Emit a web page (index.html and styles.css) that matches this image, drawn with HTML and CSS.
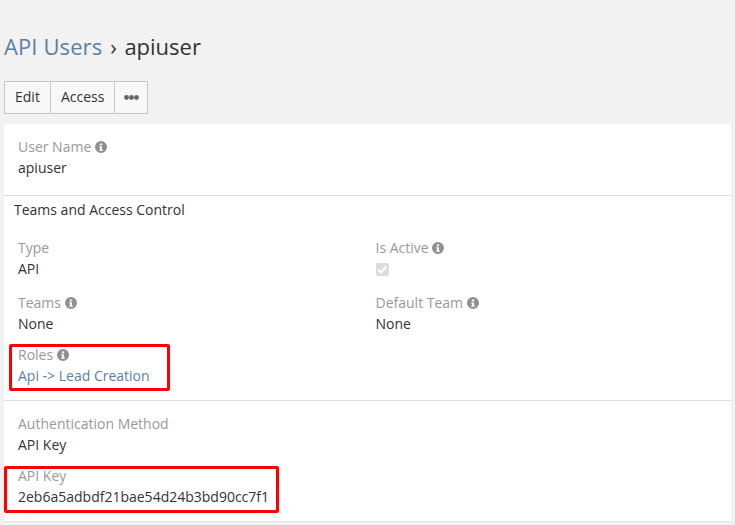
FILE: index.html
```html
<!DOCTYPE html>
<html lang="en">
<head>
<meta charset="utf-8">
<title>apiuser</title>
<link rel="stylesheet" href="styles.css">
</head>
<body>
<h1 class="title"><a class="crumb" href="#">API Users</a><span class="sep">›</span><span>apiuser</span></h1>
<div class="btn-group">
  <button class="btn">Edit</button>
  <button class="btn">Access</button>
  <button class="btn btn-more" aria-label="More"><svg width="15" height="5" viewBox="0 0 15 5"><circle cx="2.5" cy="2.5" r="2.4"/><circle cx="7.5" cy="2.5" r="2.4"/><circle cx="12.5" cy="2.5" r="2.4"/></svg></button>
</div>
<main class="panel">
  <section class="section sec-user">
    <div class="field">
      <div class="label">User Name <svg class="info" viewBox="0 0 12 12"><use href="#i"/></svg></div>
      <div class="value">apiuser</div>
    </div>
  </section>
  <section class="section sec-teams">
    <h2 class="sec-title">Teams and Access Control</h2>
    <div class="grid">
      <div class="field tall">
        <div class="label">Type</div>
        <div class="value">API</div>
      </div>
      <div class="field tall">
        <div class="label">Is Active <svg class="info" viewBox="0 0 12 12"><use href="#i"/></svg></div>
        <div class="value"><span class="check"><svg width="10" height="9" viewBox="0 0 10 9"><path d="M1 4.5 4 7.5 9 1.5" fill="none" stroke="#fff" stroke-width="2"/></svg></span></div>
      </div>
      <div class="field">
        <div class="label">Teams <svg class="info" viewBox="0 0 12 12"><use href="#i"/></svg></div>
        <div class="value">None</div>
      </div>
      <div class="field">
        <div class="label">Default Team <svg class="info" viewBox="0 0 12 12"><use href="#i"/></svg></div>
        <div class="value">None</div>
      </div>
      <div class="field last">
        <div class="label">Roles <svg class="info" viewBox="0 0 12 12"><use href="#i"/></svg></div>
        <div class="value"><a class="link" href="#">Api -&gt; Lead Creation</a></div>
        <span class="mark mark-roles"></span>
      </div>
    </div>
  </section>
  <section class="section sec-auth">
    <div class="field">
      <div class="label">Authentication Method</div>
      <div class="value">API Key</div>
    </div>
    <div class="field last">
      <div class="label">API Key</div>
      <div class="value">2eb6a5adbdf21bae54d24b3bd90cc7f1</div>
      <span class="mark mark-key"></span>
    </div>
  </section>
</main>
<svg class="defs" width="0" height="0"><defs><g id="i"><path fill-rule="evenodd" d="M6 0a6 6 0 1 1 0 12A6 6 0 0 1 6 0ZM4.8 2.4v1.9h2.4V2.4ZM4.2 5.2v1.2h.9v2.2h-.9v1.1h3.6V8.6h-.9V5.2Z"/></g></defs></svg>
</body>
</html>
```
FILE: styles.css
```css
* { box-sizing: border-box; }
html, body { height: 100%; }
body {
  margin: 0;
  padding: 0 4px;
  background: #f2f2f2;
  color: #333;
  font: 14px/21px "Open Sans", sans-serif;
  overflow: hidden;
}
.title {
  margin: 0;
  padding-top: 31px;
  height: 81px;
  font-size: 22px;
  line-height: 30px;
  font-weight: 400;
}
.crumb { color: #5b80a5; text-decoration: none; letter-spacing: .1px; }
.sep { margin: 0 7.5px 0 8px; }
.btn-group { display: flex; height: 33px; }
.btn {
  height: 33px;
  margin: 0 0 0 -1px;
  padding: 0 10px 2px;
  border: 1px solid #c7c7c7;
  background: #f8f8f8;
  color: #333;
  font: inherit;
}
.btn:first-child { margin-left: 0; }
.btn-more { padding: 0 8.5px 1px; }
.btn-more svg { display: block; fill: #666; }
.panel {
  margin-top: 10px;
  height: 397px;
  background: #fff;
  box-shadow: 0 1px 1px rgba(0,0,0,.05);
}
.section { padding: 0 14px; }
.section + .section { border-top: 1px solid #ddd; }
.sec-user { height: 71px; padding-top: 12px; }
.sec-teams { height: 205px; }
.sec-auth { padding-top: 12px; }
.sec-title {
  margin: 0 0 0 -4px;
  padding-top: 3px;
  height: 41px;
  font-size: 14px;
  line-height: 21px;
  font-weight: 400;
  color: #333;
}
.grid { display: grid; grid-template-columns: 357.5px 1fr; }
.field { position: relative; height: 52px; }
.field.tall { height: 55px; }
.label { color: #999; height: 21px; }
.value { height: 21px; }
.info { width: 12px; height: 12px; fill: #8f8f8f; vertical-align: -0.5px; }
.link { color: #5b80a5; text-decoration: none; }
.check {
  display: block;
  width: 13px;
  height: 13px;
  margin-top: 5px;
  border-radius: 2px;
  background: #dcdcdc;
  padding: 2px 1.5px;
}
.check svg { display: block; }
.mark { position: absolute; border: 3px solid #f00; border-radius: 2px; pointer-events: none; }
.mark-roles { left: -9px; top: 0; width: 161px; height: 47px; }
.mark-key { left: -14px; top: 1px; width: 275px; height: 47px; }
.defs { position: absolute; }
```
